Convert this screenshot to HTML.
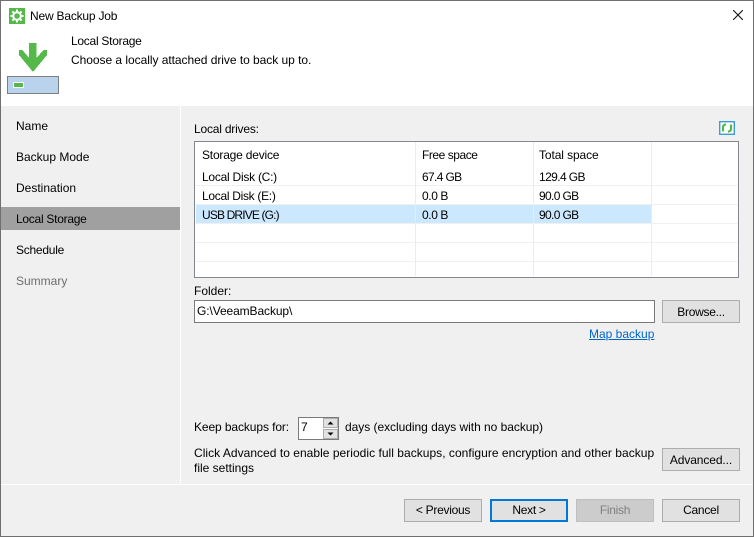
<!DOCTYPE html>
<html><head><meta charset="utf-8"><style>
html,body{margin:0;padding:0;width:754px;height:537px;overflow:hidden;background:#f0f0f0}
body{position:relative;font-family:"Liberation Sans",sans-serif;font-size:12px;color:#000}
.a{position:absolute;box-sizing:border-box}
.t{position:absolute;white-space:nowrap;line-height:14px}
.b{position:absolute;box-sizing:border-box;width:78px;height:23px;background:#e1e1e1;border:1px solid #adadad;text-align:center;line-height:21px;white-space:nowrap;letter-spacing:-.28px}
</style></head><body>
<div class="a" style="left:0;top:0;width:754px;height:106px;background:#fff"></div>
<div class="a" style="left:180px;top:106px;width:1px;height:378px;background:#fff"></div>
<div class="a" style="left:1px;top:484px;width:752px;height:1px;background:#fff"></div>

<svg class="a" style="left:9px;top:8px" width="16" height="16" viewBox="0 0 16 16"><rect width="16" height="16" fill="#54b948"/><circle cx="8" cy="8" r="3.800" fill="none" stroke="#fff" stroke-width="2"/><path d="M8 1.500v3M8 11.500v3M1.500 8h3M11.500 8h3M3.400 3.400l2 2M10.600 10.600l2 2M12.600 3.400l-2 2M5.400 10.600l-2 2" stroke="#fff" stroke-width="2"/></svg>
<div class="t" style="left:30px;top:9px;letter-spacing:-.2px">New Backup Job</div>
<svg class="a" style="left:733px;top:10px" width="10" height="10" viewBox="0 0 10 10"><path d="M0 0l10 10M10 0L0 10" stroke="#111" stroke-width="1.100"/></svg>
<div class="t" style="left:71px;top:34px;letter-spacing:-.27px">Local Storage</div>
<div class="t" style="left:71px;top:53px;letter-spacing:-.04px">Choose a locally attached drive to back up to.</div>

<svg class="a" style="left:19px;top:43px" width="28" height="29" viewBox="0 0 28 29" shape-rendering="crispEdges"><path d="M10 0h7.500v15l7-8H28v5L14 29 0 12V7h3.500l6.500 8z" fill="#54b948"/></svg>
<div class="a" style="left:7px;top:76px;width:52px;height:18px;background:#b9d3ec;border:1px solid #7f7f7f"></div>
<div class="a" style="left:13px;top:82px;width:11px;height:6px;background:#54b948;border:1px solid #fff"></div>

<div class="t" style="left:16px;top:119px">Name</div>
<div class="t" style="left:16px;top:150px">Backup Mode</div>
<div class="t" style="left:16px;top:181px">Destination</div>
<div class="a" style="left:1px;top:207px;width:179px;height:23px;background:#a0a0a0"></div>
<div class="t" style="left:16px;top:212px;letter-spacing:-.27px">Local Storage</div>
<div class="t" style="left:16px;top:243px;letter-spacing:-.25px">Schedule</div>
<div class="t" style="left:16px;top:274px;color:#6d6d6d">Summary</div>

<div class="t" style="left:194px;top:122px;letter-spacing:-.2px">Local drives:</div>
<svg class="a" style="left:719px;top:121px" width="16" height="14" viewBox="0 0 16 14"><rect x=".7" y=".7" width="14.600" height="12.600" fill="#fff" stroke="#3c9bd8" stroke-width="1.400"/><path d="M4 10.500V6Q4 3.800 7 3.300M12 3.500V8Q12 10.200 9 10.700" fill="none" stroke="#54b948" stroke-width="2.200"/></svg>

<div class="a" style="left:194px;top:141px;width:545px;height:137px;background:#fff;border:1px solid #828790"></div>
<div class="a" style="left:196px;top:205px;width:456px;height:18px;background:#cce8ff"></div>
<div class="a" style="left:195px;top:185px;width:543px;height:1px;background:#f0f0f0"></div>
<div class="a" style="left:195px;top:204px;width:543px;height:1px;background:#f0f0f0"></div>
<div class="a" style="left:195px;top:223px;width:543px;height:1px;background:#f0f0f0"></div>
<div class="a" style="left:195px;top:242px;width:543px;height:1px;background:#f0f0f0"></div>
<div class="a" style="left:195px;top:261px;width:543px;height:1px;background:#f0f0f0"></div>
<div class="a" style="left:415px;top:142px;width:1px;height:134px;background:#ececec"></div>
<div class="a" style="left:533px;top:142px;width:1px;height:134px;background:#ececec"></div>
<div class="a" style="left:651px;top:142px;width:1px;height:134px;background:#ececec"></div>

<div class="t" style="left:202px;top:148px;letter-spacing:-.2px">Storage device</div>
<div class="t" style="left:422px;top:148px;letter-spacing:-.45px">Free space</div>
<div class="t" style="left:539px;top:148px;letter-spacing:-.1px">Total space</div>
<div class="t" style="left:202px;top:170px;letter-spacing:-.25px">Local Disk (C:)</div>
<div class="t" style="left:422px;top:170px;letter-spacing:-.65px">67.4 GB</div>
<div class="t" style="left:539px;top:170px;letter-spacing:-.6px">129.4 GB</div>
<div class="t" style="left:202px;top:189px;letter-spacing:-.3px">Local Disk (E:)</div>
<div class="t" style="left:422px;top:189px;letter-spacing:-.4px">0.0 B</div>
<div class="t" style="left:539px;top:189px;letter-spacing:-.65px">90.0 GB</div>
<div class="t" style="left:202px;top:208px;letter-spacing:-.85px">USB DRIVE (G:)</div>
<div class="t" style="left:422px;top:208px;letter-spacing:-.4px">0.0 B</div>
<div class="t" style="left:539px;top:208px;letter-spacing:-.65px">90.0 GB</div>

<div class="t" style="left:194px;top:284px">Folder:</div>
<div class="a" style="left:194px;top:300px;width:461px;height:23px;background:#fff;border:1px solid #7a7a7a"></div>
<div class="t" style="left:197px;top:304px;letter-spacing:-.1px">G:\VeeamBackup\</div>
<div class="b" style="left:662px;top:300px;line-height:23px">Browse...</div>
<div class="t" style="left:589px;top:327px;color:#0066cc;text-decoration:underline">Map backup</div>

<div class="t" style="left:194px;top:420px;letter-spacing:-.1px">Keep backups for:</div>
<div class="a" style="left:298px;top:417px;width:41px;height:23px;background:#fff;border:1px solid #7a7a7a"></div>
<div class="t" style="left:301px;top:420px">7</div>
<div class="a" style="left:323px;top:418px;width:15px;height:10px;background:#e1e1e1;border:1px solid #adadad"></div>
<div class="a" style="left:323px;top:429px;width:15px;height:10px;background:#e1e1e1;border:1px solid #adadad"></div>
<svg class="a" style="left:323px;top:418px" width="15" height="21" viewBox="0 0 15 21"><path d="M4.500 6.500L7.500 3.500 10.500 6.500zM4.500 14.500h6L7.500 17.500z" fill="#000"/></svg>
<div class="t" style="left:345px;top:420px;letter-spacing:-.04px">days (excluding days with no backup)</div>
<div class="t" style="left:194px;top:446px;letter-spacing:.03px">Click Advanced to enable periodic full backups, configure encryption and other backup</div>
<div class="t" style="left:194px;top:461px">file settings</div>
<div class="b" style="left:662px;top:448px;line-height:23px;letter-spacing:-.1px">Advanced...</div>

<div class="b" style="left:404px;top:499px">&lt; Previous</div>
<div class="b" style="left:490px;top:499px;border:2px solid #0078d7;line-height:19px">Next &gt;</div>
<div class="b" style="left:576px;top:499px;background:#ccc;border-color:#bfbfbf;color:#808080">Finish</div>
<div class="b" style="left:662px;top:499px">Cancel</div>

<div class="a" style="left:0;top:0;width:754px;height:537px;border:1px solid #6f6f6f"></div>
</body></html>
